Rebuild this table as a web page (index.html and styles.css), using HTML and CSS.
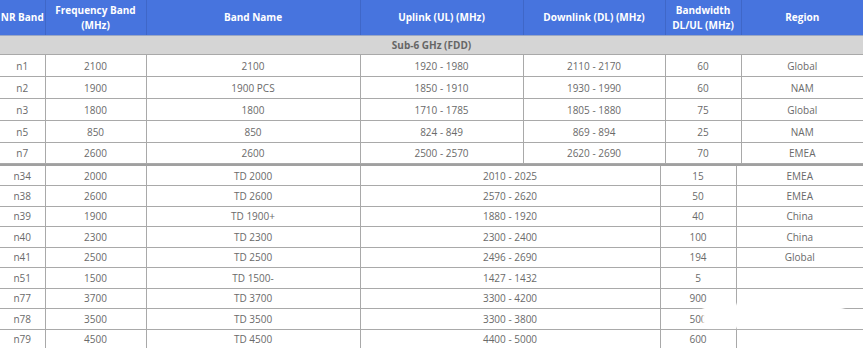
FILE: index.html
```html
<!DOCTYPE html>
<html lang="en">
<head>
  <meta charset="UTF-8" />
  <title>NR bands</title>
  <link rel="stylesheet" href="styles.css">
</head>
<body>
  <table class="bands fdd">
    <colgroup>
      <col class="w-nr"><col class="w-freq"><col class="w-name">
      <col class="w-ul"><col class="w-dl"><col class="w-bw"><col class="w-region">
    </colgroup>
    <thead>
      <tr>
        <th>NR Band</th>
        <th>Frequency Band<br>(MHz)</th>
        <th>Band Name</th>
        <th>Uplink (UL) (MHz)</th>
        <th>Downlink (DL) (MHz)</th>
        <th>Bandwidth<br>DL/UL (MHz)</th>
        <th>Region</th>
      </tr>
    </thead>
    <tbody>
      <tr class="group"><td colspan="7">Sub-6 GHz (FDD)</td></tr>
      <tr><td>n1</td><td>2100</td><td>2100</td><td>1920 - 1980</td><td>2110 - 2170</td><td>60</td><td>Global</td></tr>
      <tr><td>n2</td><td>1900</td><td>1900 PCS</td><td>1850 - 1910</td><td>1930 - 1990</td><td>60</td><td>NAM</td></tr>
      <tr><td>n3</td><td>1800</td><td>1800</td><td>1710 - 1785</td><td>1805 - 1880</td><td>75</td><td>Global</td></tr>
      <tr><td>n5</td><td>850</td><td>850</td><td>824 - 849</td><td>869 - 894</td><td>25</td><td>NAM</td></tr>
      <tr class="last"><td>n7</td><td>2600</td><td>2600</td><td>2500 - 2570</td><td>2620 - 2690</td><td>70</td><td>EMEA</td></tr>
    </tbody>
  </table>

  <table class="bands tdd">
    <colgroup>
      <col class="w-nr"><col class="w-freq"><col class="w-name">
      <col class="w-range"><col class="w-bw2"><col class="w-region2">
    </colgroup>
    <tbody>
      <tr><td>n34</td><td>2000</td><td>TD 2000</td><td>2010 - 2025</td><td>15</td><td>EMEA</td></tr>
      <tr><td>n38</td><td>2600</td><td>TD 2600</td><td>2570 - 2620</td><td>50</td><td>EMEA</td></tr>
      <tr><td>n39</td><td>1900</td><td>TD 1900+</td><td>1880 - 1920</td><td>40</td><td>China</td></tr>
      <tr><td>n40</td><td>2300</td><td>TD 2300</td><td>2300 - 2400</td><td>100</td><td>China</td></tr>
      <tr><td>n41</td><td>2500</td><td>TD 2500</td><td>2496 - 2690</td><td>194</td><td>Global</td></tr>
      <tr><td>n51</td><td>1500</td><td>TD 1500-</td><td>1427 - 1432</td><td>5</td><td></td></tr>
      <tr><td>n77</td><td>3700</td><td>TD 3700</td><td>3300 - 4200</td><td>900</td><td></td></tr>
      <tr><td>n78</td><td>3500</td><td>TD 3500</td><td>3300 - 3800</td><td>500</td><td></td></tr>
      <tr><td>n79</td><td>4500</td><td>TD 4500</td><td>4400 - 5000</td><td>600</td><td></td></tr>
    </tbody>
  </table>

  <div class="smudge"></div>
</body>
</html>
```

FILE: styles.css
```css
body {
  margin: 0;
  background: #fff;
  font-family: "Open Sans", "DejaVu Sans", sans-serif;
  position: relative;
  overflow: hidden;
  height: 348px;
}
.bands {
  width: 863px;
  table-layout: fixed;
  border-collapse: collapse;
  font-size: 10px;
  color: #6a6a6a;
}
.bands td,
.bands th {
  padding: 0;
  text-align: center;
  vertical-align: middle;
  border: 1px solid #a9a9a9;
}
.bands td:first-child,
.bands th:first-child {
  border-left: none;
}
.bands td:last-child,
.bands th:last-child {
  border-right: none;
}
.bands th {
  background: #4774de;
  color: #fff;
  font-weight: bold;
  line-height: 15px;
  height: 35px;
  border-top: none;
  border-color: #3f67c8;
  border-bottom-color: #9aa7c4;
}
.bands tr { height: 22px; }
.fdd tr.last { height: 21px; }
.bands tr.group { height: 19px; }
.group td {
  background: #d5d5d5;
  color: #666;
  font-weight: bold;
  line-height: 12px;
}
.tdd tr { height: 20.5px; }
.tdd td { line-height: 12px; }
.tdd {
  border-top: 2px solid #a0a0a0;
}

.w-nr { width: 45px; }
.w-freq { width: 101px; }
.w-name { width: 214px; }
.w-ul { width: 163px; }
.w-dl { width: 142px; }
.w-bw { width: 76px; }
.w-region { width: 122px; }
.w-range { width: 300px; }
.w-bw2 { width: 76px; }
.w-region2 { width: 127px; }

.smudge {
  position: absolute;
  left: 703px;
  top: 304px;
  width: 144px;
  height: 24px;
  background: #fff;
  border-radius: 12px 40px 30px 14px;
  filter: blur(1px);
}
```
